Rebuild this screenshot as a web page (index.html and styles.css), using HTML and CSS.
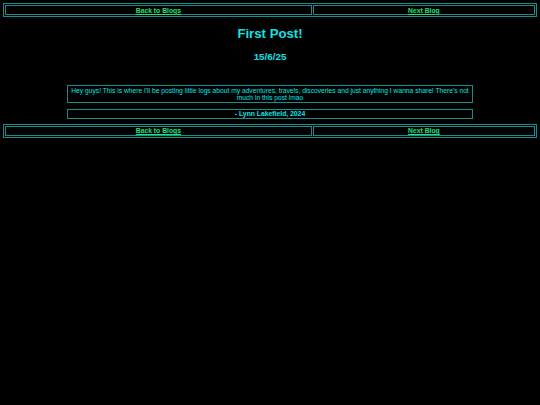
FILE: index.html
```html
<!DOCTYPE html>
<html>
<head>
<meta charset="utf-8">
<title>First Post!</title>
<link rel="stylesheet" href="styles.css">
</head>
<body>
<table class="nav">
  <tr>
    <td><a href="#">Back to Blogs</a></td>
    <td><a href="#">Next Blog</a></td>
  </tr>
</table>
<h1 class="title">First Post!</h1>
<h2 class="date">15/6/25</h2>
<div class="post">Hey guys! This is where I'll be posting little logs about my adventures, travels, discoveries and just anything I wanna share! There's not much in this post lmao</div>
<div class="sign">- Lynn Lakefield, 2024</div>
<table class="nav nav-bottom">
  <tr>
    <td><a href="#">Back to Blogs</a></td>
    <td><a href="#">Next Blog</a></td>
  </tr>
</table>
</body>
</html>
```
FILE: styles.css
```css
html, body {
  background: #000;
}
body {
  margin: 3px;
  font-family: "Liberation Sans", Arial, sans-serif;
  font-size: 6.8px;
  line-height: 7.6px;
  color: #00e8e8;
}
.nav {
  width: 100%;
  border: 1px solid #1a8c8c;
  border-spacing: 1px;
  border-collapse: separate;
}
.nav td {
  border: 1px solid #1a8c8c;
  padding: 0.5px 1px;
  text-align: center;
  font-weight: bold;
  line-height: 7px;
}
.nav a {
  color: #1fe07a;
}
.title {
  font-size: 13.2px;
  line-height: 15px;
  margin: 9px 0 8px;
  text-align: center;
  color: #14e0e0;
}
.date {
  font-size: 9.8px;
  line-height: 11px;
  margin: 10px 0 0;
  text-align: center;
  color: #14e0e0;
}
.post {
  box-sizing: border-box;
  width: 76%;
  margin: 23px auto 0;
  border: 1px solid #1a8c8c;
  padding: 0.5px 1px;
  text-align: center;
  font-size: 6.7px;
}
.sign {
  box-sizing: border-box;
  width: 76%;
  margin: 6px auto 0;
  border: 1px solid #1a8c8c;
  text-align: center;
  font-weight: bold;
}
.nav-bottom {
  margin-top: 5px;
}
```
